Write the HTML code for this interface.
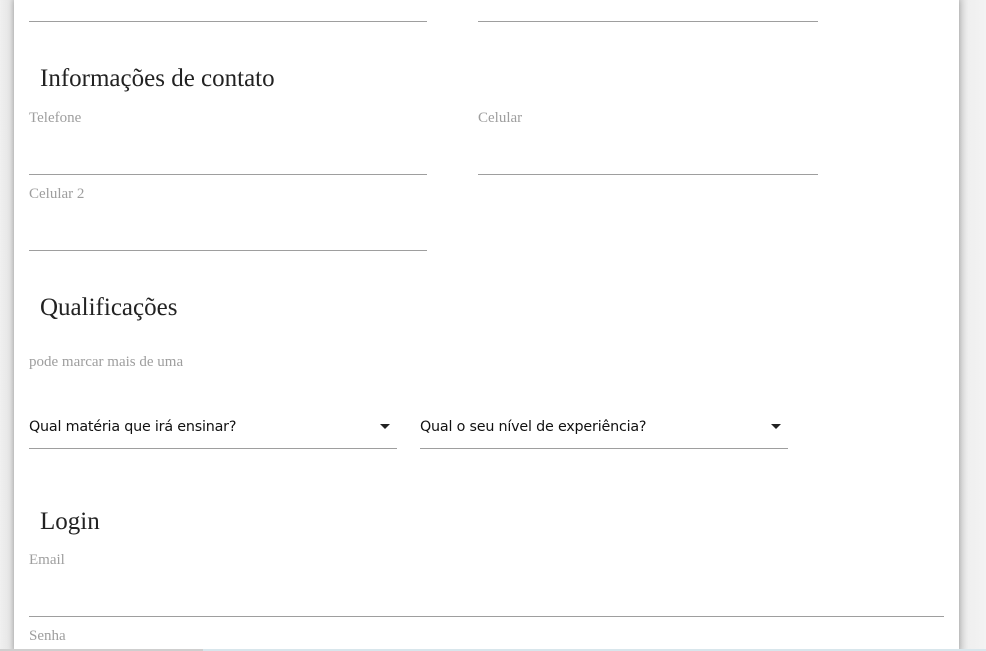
<!DOCTYPE html>
<html><head><meta charset="utf-8"><style>
html,body{margin:0;padding:0;width:986px;height:651px;overflow:hidden;background:#f2f2f2;position:relative}
.l{position:absolute;left:0;top:0;width:14px;height:651px;background:linear-gradient(to right,#f0f0f0,#e6e6e6 70%,#d8d8d8)}
.card{position:absolute;left:14px;top:0;width:945px;height:651px;background:#fff;box-shadow:0 0 6px rgba(0,0,0,.25)}
.r{position:absolute;left:959px;top:0;width:27px;height:651px;background:linear-gradient(to right,#d6d6d6,#efefef 35%,#f3f3f3)}
.ln{position:absolute;height:1px;background:#9e9e9e}
.h{position:absolute;left:40px;font-family:"Liberation Serif",serif;font-size:25px;color:#222;line-height:1}
.lb{position:absolute;left:29px;font-family:"Liberation Serif",serif;font-size:15px;color:#9e9e9e;line-height:1}
.s{position:absolute;font-family:"DejaVu Sans","Liberation Sans",sans-serif;font-size:14.3px;color:#111;line-height:1;letter-spacing:-0.2px}
.ar{position:absolute;width:0;height:0;border-left:5px solid transparent;border-right:5px solid transparent;border-top:5px solid #222}
.bot{position:absolute;top:649px;height:2px;background:#d8e6ec}
</style></head><body>
<div class="l"></div><div class="r"></div>
<div class="card"></div>
<div class="ln" style="left:29px;top:21px;width:398px"></div>
<div class="ln" style="left:478px;top:21px;width:340px"></div>
<div class="h" style="top:66px">Informações de contato</div>
<div class="lb" style="top:111px">Telefone</div>
<div class="lb" style="left:478px;top:111px">Celular</div>
<div class="ln" style="left:29px;top:174px;width:398px"></div>
<div class="ln" style="left:478px;top:174px;width:340px"></div>
<div class="lb" style="top:187px">Celular 2</div>
<div class="ln" style="left:29px;top:250px;width:398px"></div>
<div class="h" style="top:295px">Qualificações</div>
<div class="lb" style="top:355px">pode marcar mais de uma</div>
<div class="s" style="left:29px;top:420px">Qual matéria que irá ensinar?</div>
<div class="ar" style="left:380px;top:424px"></div>
<div class="ln" style="left:29px;top:448px;width:368px"></div>
<div class="s" style="left:420px;top:420px">Qual o seu nível de experiência?</div>
<div class="ar" style="left:771px;top:424px"></div>
<div class="ln" style="left:420px;top:448px;width:368px"></div>
<div class="h" style="top:509px">Login</div>
<div class="lb" style="top:553px">Email</div>
<div class="ln" style="left:29px;top:616px;width:915px"></div>
<div class="lb" style="top:629px">Senha</div>
<div class="bot" style="left:0;width:203px;background:#cfcfcf"></div>
<div class="bot" style="left:203px;width:783px"></div>
</body></html>
